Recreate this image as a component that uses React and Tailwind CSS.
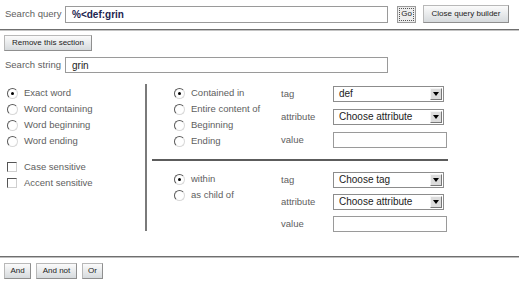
const Radio = ({ checked }) => (
    <span className="relative inline-block w-[11px] h-[11px] rounded-full bg-white border border-t-[#5a5a5a] border-l-[#5a5a5a] border-b-[#d8d8d8] border-r-[#d8d8d8] shrink-0">
        {checked && (
            <span className="absolute left-[3px] top-[3px] w-[3px] h-[3px] rounded-full bg-black" />
        )}
    </span>
);

const Check = () => (
    <span className="inline-block w-[10px] h-[10px] bg-white border border-t-[#555] border-l-[#555] border-b-[#cfcfcf] border-r-[#cfcfcf] shrink-0" />
);

const Btn = ({ children, className = "" }) => (
    <button
        className={
            "h-[16px] px-[5px] text-[8px] leading-none text-[#222] border border-[#b8b8b8] border-b-[#8f8f8f] border-r-[#8f8f8f] bg-gradient-to-b from-[#fbfbfb] to-[#d6dadd] " +
            className
        }
    >
        {children}
    </button>
);

const Select = ({ value }) => (
    <div className="flex items-center h-[16px] w-[111px] bg-white border border-[#8c8c8c] pl-[5px] pr-[1px]">
        <span className="flex-1 text-[10px] text-[#222] leading-none">{value}</span>
        <span className="flex items-center justify-center w-[12px] h-[12px] bg-[#dcdcdc] border border-t-[#f5f5f5] border-l-[#f5f5f5] border-b-[#777] border-r-[#777]">
            <span className="block w-0 h-0 border-l-[3px] border-r-[3px] border-t-[4px] border-l-transparent border-r-transparent border-t-black" />
        </span>
    </div>
);

const TextInput = () => (
    <div className="h-[16px] w-[114px] bg-white border border-[#9a9a9a]" />
);

const RadioRow = ({ checked, label }) => (
    <div className="flex items-center h-[16px] gap-[6px]">
        <Radio checked={checked} />
        <span>{label}</span>
    </div>
);

const App = () => {
    return (
        <div
            className="w-[519px] h-[292px] bg-white text-[9.5px] text-[#5e5e5e] overflow-hidden"
            style={{ fontFamily: '"Liberation Sans", Arial, sans-serif' }}
        >
            <div className="flex items-center h-[18px] mt-[5px] pl-[5px]">
                <span className="w-[60px]">Search query</span>
                <div className="h-[17px] w-[323px] bg-white border border-[#9a9a9a] flex items-center pl-[6px] text-[10px] font-bold text-[#1c2450]">
                    %&lt;def:grin
                </div>
                <button className="ml-[9px] h-[17px] w-[19px] p-0 text-[8px] leading-none text-[#222] border border-[#9a9a9a] bg-[#ededed] outline outline-1 outline-dotted outline-[#555] outline-offset-[-3px]">
                    Go
                </button>
                <Btn className="ml-[7px] h-[18px] w-[86px]">Close query builder</Btn>
            </div>

            <div className="mt-[6px] h-[1px] bg-[#6f6f6f]" />
            <div className="h-[1px] bg-[#c4c4c4]" />

            <div className="mt-[4px] pl-[4px]">
                <Btn className="w-[88px]">Remove this section</Btn>
            </div>

            <div className="flex items-center mt-[6px] pl-[5px]">
                <span className="w-[60px]">Search string</span>
                <div className="h-[16px] w-[323px] bg-white border border-[#9a9a9a] flex items-center pl-[6px] text-[10px] text-[#222]">
                    grin
                </div>
            </div>

            <div className="flex items-start mt-[11px]">
                <div className="w-[145px] pl-[7px] pt-[1px]">
                    <RadioRow checked label="Exact word" />
                    <RadioRow label="Word containing" />
                    <RadioRow label="Word beginning" />
                    <RadioRow label="Word ending" />
                    <div className="mt-[10px]">
                        <div className="flex items-center h-[16px] gap-[7px]">
                            <Check />
                            <span>Case sensitive</span>
                        </div>
                        <div className="flex items-center h-[16px] gap-[7px]">
                            <Check />
                            <span>Accent sensitive</span>
                        </div>
                    </div>
                </div>
                <div className="w-[2px] h-[147px] bg-[#7a7a7a]" />
                <div className="flex flex-col">
                    <div className="flex">
                        <div className="w-[134px] pl-[27px] pt-[1px]">
                            <RadioRow checked label="Contained in" />
                            <RadioRow label="Entire content of" />
                            <RadioRow label="Beginning" />
                            <RadioRow label="Ending" />
                        </div>
                        <div className="grid grid-cols-[52px_auto] gap-y-[6px] mt-[1px] items-center">
                            <span>tag</span>
                            <Select value="def" />
                            <span>attribute</span>
                            <Select value="Choose attribute" />
                            <span>value</span>
                            <TextInput />
                        </div>
                    </div>
                    <div className="shrink-0 mt-[10px] ml-[5px] w-[296px] h-[2px] bg-[#5c5c5c]" />
                    <div className="flex">
                        <div className="w-[134px] pl-[27px] mt-[10px]">
                            <RadioRow checked label="within" />
                            <RadioRow label="as child of" />
                        </div>
                        <div className="grid grid-cols-[52px_auto] gap-y-[6px] mt-[11px] items-center">
                            <span>tag</span>
                            <Select value="Choose tag" />
                            <span>attribute</span>
                            <Select value="Choose attribute" />
                            <span>value</span>
                            <TextInput />
                        </div>
                    </div>
                </div>
            </div>

            <div className="mt-[24px] h-[1px] bg-[#6f6f6f]" />
            <div className="h-[1px] bg-[#bdbdbd]" />

            <div className="flex gap-[5px] mt-[5px] pl-[4px]">
                <Btn className="w-[27px]">And</Btn>
                <Btn className="w-[41px]">And not</Btn>
                <Btn className="w-[21px]">Or</Btn>
            </div>
        </div>
    );
};

export default App;
